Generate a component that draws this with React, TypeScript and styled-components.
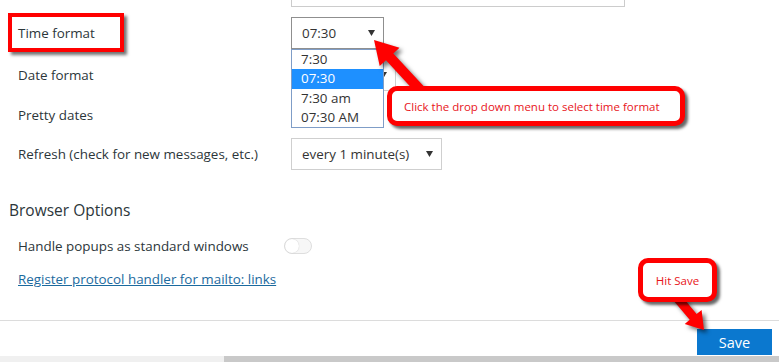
import styled, { createGlobalStyle } from "styled-components";

const GlobalStyle = createGlobalStyle`
  html, body {
    margin: 0;
    padding: 0;
    background: #fff;
  }
  body {
    font-family: "Open Sans", "Liberation Sans", sans-serif;
    color: #2c363a;
  }
`

const Page = styled.div`
  position: relative;
  width: 779px;
  height: 362px;
  overflow: hidden;
  display: flex;
  flex-direction: column;
  background: #fff;
`

const Content = styled.div`
  height: 320px;
  display: flex;
  flex-direction: column;
`

const TopField = styled.div`
  margin-left: 291px;
  width: 334px;
  height: 7px;
  box-sizing: border-box;
  border: 1px solid #ccc;
  border-top: none;
`

const Settings = styled.div`
  display: flex;
  flex-direction: column;
  gap: 10px;
  padding: 10px 0 0 18px;
`

const Row = styled.div<{ $h: number; $label: number }>`
  display: flex;
  align-items: center;
  height: ${p => p.$h}px;
  font-size: 13.4px;

  & > label {
    width: ${p => p.$label}px;
    flex: none;
  }
`

const SelectWrap = styled.div`
  position: relative;
`

const Select = styled.div<{ $w: number; $dark?: boolean }>`
  box-sizing: border-box;
  width: ${p => p.$w}px;
  height: 32px;
  border: 1px solid ${p => (p.$dark ? "#8f8f8f" : "#cfcfcf")};
  background: #fff;
  display: flex;
  align-items: center;
  justify-content: space-between;
  padding: 0 8px 0 10px;
  font-size: 13.4px;
  color: #333;
`

const Caret = () => (
  <svg width="7" height="6" viewBox="0 0 7 6">
    <path d="M0 0 L7 0 L3.5 6 Z" fill="#333" />
  </svg>
)

const OptionList = styled.ul`
  position: absolute;
  top: 100%;
  left: 0;
  margin: 0;
  padding: 0;
  list-style: none;
  width: 93px;
  box-sizing: border-box;
  border: 1px solid #7f9dc7;
  background: #fff;
  z-index: 2;
`

const Option = styled.li<{ $active?: boolean }>`
  height: 19.3px;
  line-height: 19px;
  padding-left: 9px;
  font-size: 13.4px;
  color: ${p => (p.$active ? "#fff" : "#333")};
  background: ${p => (p.$active ? "#1e90ff" : "transparent")};
`

const Heading = styled.h2`
  margin: 29px 0 0 9px;
  font-size: 15.5px;
  line-height: 22px;
  font-weight: 400;
  color: #2c363a;
`

const BrowserRows = styled.div`
  display: flex;
  flex-direction: column;
  gap: 10px;
  padding: 13px 0 0 18px;
`

const Toggle = styled.span`
  box-sizing: border-box;
  width: 28px;
  height: 16px;
  border: 1px solid #dedede;
  border-radius: 8px;
  background: #f7f7f7;
  position: relative;

  &::after {
    content: "";
    position: absolute;
    left: 0;
    top: 0;
    width: 14px;
    height: 14px;
    border-radius: 50%;
    background: #fff;
    box-shadow: 0 0 1px #bbb;
  }
`

const Link = styled.a`
  color: #1b6a9e;
  text-decoration: underline;
  font-size: 13.4px;
`

const Footer = styled.div`
  border-top: 1px solid #dcdcdc;
  display: flex;
  justify-content: flex-end;
  padding: 8px 7px 1px 0;
`

const SaveButton = styled.button`
  width: 75px;
  height: 26px;
  border: none;
  background: #0b78cf;
  color: #fff;
  font-family: "Open Sans", "Liberation Sans", sans-serif;
  font-size: 14.5px;
  padding: 0;
`

const Scrollbar = styled.div`
  height: 6px;
  background: #f0f0f0;
  display: flex;
  justify-content: flex-end;
`

const Thumb = styled.div`
  width: 555px;
  background: #c9c9c9;
`

const RedFrame = styled.div`
  position: absolute;
  left: 8px;
  top: 13px;
  width: 116px;
  height: 39px;
  box-sizing: border-box;
  border: 4px solid #f00;
  box-shadow: 3px 3px 3px rgba(0, 0, 0, 0.55);
  z-index: 3;
`

const Callout = styled.div<{ $x: number; $y: number; $w: number; $h: number }>`
  position: absolute;
  left: ${p => p.$x}px;
  top: ${p => p.$y}px;
  width: ${p => p.$w}px;
  height: ${p => p.$h}px;
  box-sizing: border-box;
  border: 5px solid #f00;
  border-radius: 10px;
  background: #fff;
  box-shadow: 3px 3px 3px rgba(0, 0, 0, 0.6);
  display: flex;
  align-items: center;
  justify-content: ${p => (p.$w < 120 ? "center" : "flex-start")};
  padding-left: ${p => (p.$w < 120 ? 0 : 12)}px;
  color: #e8141a;
  font-family: "Open Sans", "Liberation Sans", sans-serif;
  font-size: 11.5px;
  z-index: 5;
`

const Overlay = styled.svg`
  position: absolute;
  left: 0;
  top: 0;
  width: 779px;
  height: 362px;
  pointer-events: none;
  z-index: 4;
  filter: drop-shadow(3px 3px 2px rgba(0, 0, 0, 0.55));
`

function arrowPoints(x1: number, y1: number, x2: number, y2: number, w: number, hw: number, hl: number) {
  const dx = x2 - x1
  const dy = y2 - y1
  const len = Math.hypot(dx, dy)
  const ux = dx / len
  const uy = dy / len
  const nx = -uy
  const ny = ux
  const bx = x2 - ux * hl
  const by = y2 - uy * hl
  const pts = [
    [x1 + nx * w / 2, y1 + ny * w / 2],
    [bx + nx * w / 2, by + ny * w / 2],
    [bx + nx * hw / 2, by + ny * hw / 2],
    [x2, y2],
    [bx - nx * hw / 2, by - ny * hw / 2],
    [bx - nx * w / 2, by - ny * w / 2],
    [x1 - nx * w / 2, y1 - ny * w / 2],
  ]
  return pts.map(p => p.map(v => v.toFixed(1)).join(",")).join(" ")
}

const timeOptions = ["7:30", "07:30", "7:30 am", "07:30 AM"]

export default function App() {
  return (
    <>
      <GlobalStyle />
      <Page>
        <Content>
          <TopField />
          <Settings>
            <Row $h={32} $label={273}>
              <label>Time format</label>
              <SelectWrap>
                <Select $w={93} $dark>
                  <span>07:30</span>
                  <Caret />
                </Select>
                <OptionList>
                  {timeOptions.map(o => (
                    <Option key={o} $active={o === "07:30"}>{o}</Option>
                  ))}
                </OptionList>
              </SelectWrap>
            </Row>
            <Row $h={32} $label={273}>
              <label>Date format</label>
              <Select $w={105}>
                <span />
                <Caret />
              </Select>
            </Row>
            <Row $h={27} $label={273}>
              <label>Pretty dates</label>
            </Row>
            <Row $h={32} $label={273}>
              <label>Refresh (check for new messages, etc.)</label>
              <Select $w={151}>
                <span>every 1 minute(s)</span>
                <Caret />
              </Select>
            </Row>
          </Settings>
          <Heading>Browser Options</Heading>
          <BrowserRows>
            <Row $h={24} $label={266}>
              <label>Handle popups as standard windows</label>
              <Toggle />
            </Row>
            <Row $h={22} $label={266}>
              <Link href="#">Register protocol handler for mailto: links</Link>
            </Row>
          </BrowserRows>
        </Content>
        <Footer>
          <SaveButton>Save</SaveButton>
        </Footer>
        <Scrollbar>
          <Thumb />
        </Scrollbar>

        <RedFrame />
        <Overlay viewBox="0 0 779 362">
          <polygon points={arrowPoints(424, 94, 374, 40, 10, 27, 23)} fill="#f00" />
          <polygon points={arrowPoints(674, 294, 704, 330, 9, 22, 17)} fill="#f00" />
        </Overlay>
        <Callout $x={387} $y={86} $w={298} $h={40}>
          Click the drop down menu to select time format
        </Callout>
        <Callout $x={638} $y={258} $w={79} $h={44}>
          Hit Save
        </Callout>
      </Page>
    </>
  )
}
